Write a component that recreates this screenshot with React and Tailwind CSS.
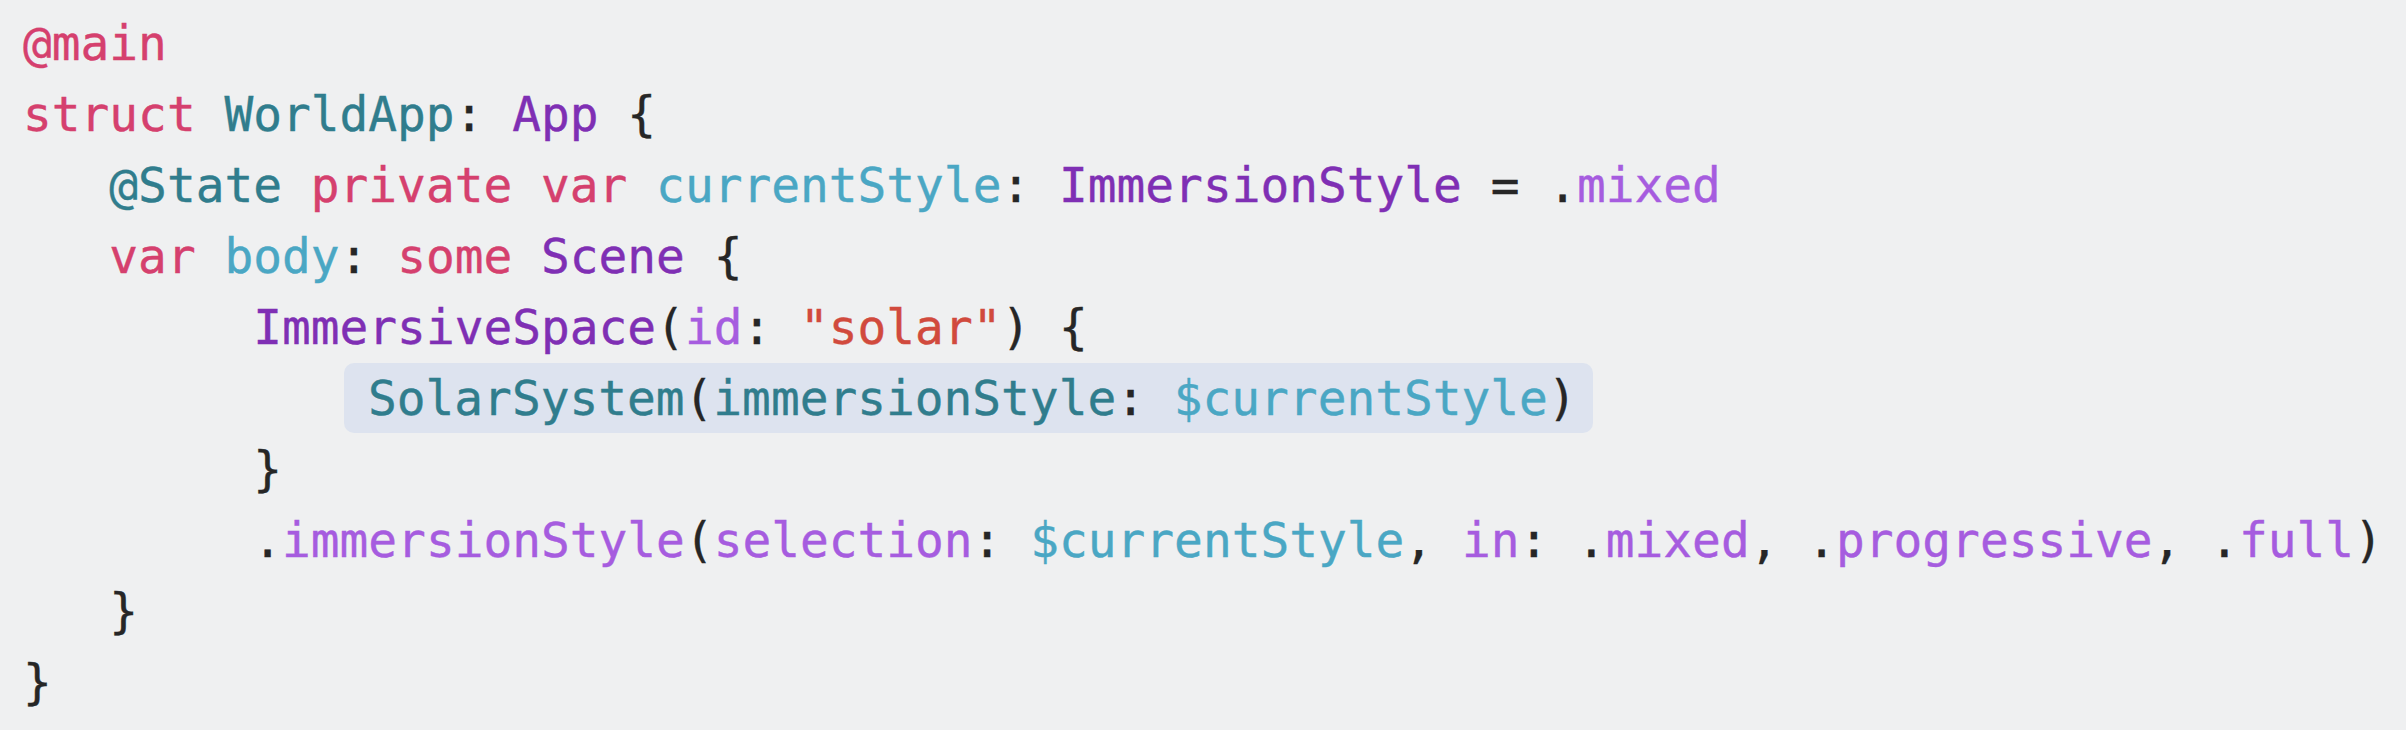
import React from "react";

// token colours, Xcode light-ish palette
const C = {
  kw: "text-[#d5406e]",
  type: "text-[#307d8d]",
  ident: "text-[#4aa7c4]",
  sys: "text-[#7f2fb4]",
  member: "text-[#a65cdf]",
  str: "text-[#d14a3d]",
  plain: "text-[#262626]",
};

const lines = [
  { indent: "", tokens: [["@main", C.kw]] },
  {
    indent: "",
    tokens: [
      ["struct ", C.kw],
      ["WorldApp", C.type],
      [": ", C.plain],
      ["App", C.sys],
      [" {", C.plain],
    ],
  },
  {
    indent: "   ",
    tokens: [
      ["@State ", C.type],
      ["private var ", C.kw],
      ["currentStyle", C.ident],
      [": ", C.plain],
      ["ImmersionStyle", C.sys],
      [" = .", C.plain],
      ["mixed", C.member],
    ],
  },
  {
    indent: "   ",
    tokens: [
      ["var ", C.kw],
      ["body", C.ident],
      [": ", C.plain],
      ["some ", C.kw],
      ["Scene", C.sys],
      [" {", C.plain],
    ],
  },
  {
    indent: "        ",
    tokens: [
      ["ImmersiveSpace", C.sys],
      ["(", C.plain],
      ["id", C.member],
      [": ", C.plain],
      ['"solar"', C.str],
      [") {", C.plain],
    ],
  },
  {
    highlight: true,
    tokens: [
      ["SolarSystem", C.type],
      ["(", C.plain],
      ["immersionStyle", C.type],
      [": ", C.plain],
      ["$currentStyle", C.ident],
      [")", C.plain],
    ],
  },
  { indent: "        ", tokens: [["}", C.plain]] },
  {
    indent: "        ",
    tokens: [
      [".", C.plain],
      ["immersionStyle", C.member],
      ["(", C.plain],
      ["selection", C.member],
      [": ", C.plain],
      ["$currentStyle", C.ident],
      [", ", C.plain],
      ["in", C.member],
      [": .", C.plain],
      ["mixed", C.member],
      [", .", C.plain],
      ["progressive", C.member],
      [", .", C.plain],
      ["full", C.member],
      [")", C.plain],
    ],
  },
  { indent: "   ", tokens: [["}", C.plain]] },
  { indent: "", tokens: [["}", C.plain]] },
];

function Tokens({ tokens }) {
  return tokens.map(([text, cls], i) => (
    <span key={i} className={cls}>
      {text}
    </span>
  ));
}

export default function App() {
  return (
    <div className="w-[2406px] h-[730px] bg-[#eff0f1] overflow-hidden">
      <div
        className="pt-[8px] pl-[23px] text-[47.8px] leading-[71px] whitespace-pre [-webkit-text-stroke:0.4px_currentColor]"
        style={{ fontFamily: '"DejaVu Sans Mono", "Liberation Mono", monospace' }}
      >
        {lines.map((line, i) =>
          line.highlight ? (
            <div key={i} className="h-[71px] pl-[321px] flex">
              <div className="h-[70px] flex items-center rounded-[10px] bg-[#dde3ef] pl-[24px] pr-[16px]">
                <Tokens tokens={line.tokens} />
              </div>
            </div>
          ) : (
            <div key={i} className="h-[71px]">
              {line.indent}
              <Tokens tokens={line.tokens} />
            </div>
          )
        )}
      </div>
    </div>
  );
}
